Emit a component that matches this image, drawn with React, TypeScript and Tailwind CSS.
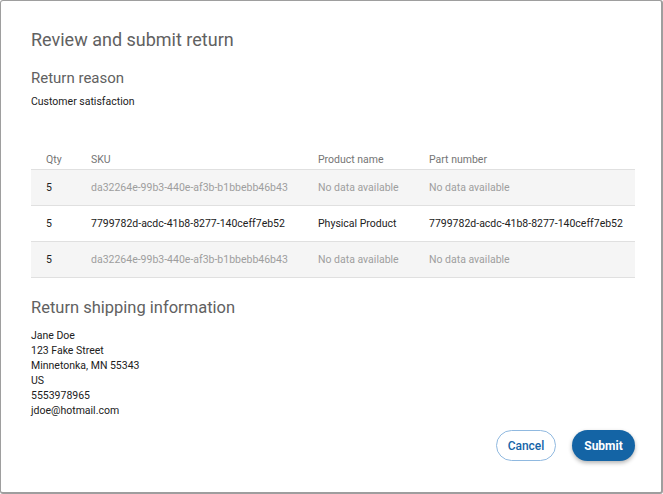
const rows = [
  { qty: "5", sku: "da32264e-99b3-440e-af3b-b1bbebb46b43", name: "No data available", part: "No data available", empty: true },
  { qty: "5", sku: "7799782d-acdc-41b8-8277-140ceff7eb52", name: "Physical Product", part: "7799782d-acdc-41b8-8277-140ceff7eb52", empty: false },
  { qty: "5", sku: "da32264e-99b3-440e-af3b-b1bbebb46b43", name: "No data available", part: "No data available", empty: true },
];

const address = ["Jane Doe", "123 Fake Street", "Minnetonka, MN 55343", "US", "5553978965", "jdoe@hotmail.com"];

function App() {
  return (
    <div
      className="w-[663px] h-[494px] box-border bg-white border-t border-l border-r-2 border-b-2 border-[#9e9e9e] rounded-[3px] pl-[30px] pr-[26px] pt-[28px] flex flex-col"
      style={{ fontFamily: "Roboto, 'Liberation Sans', sans-serif" }}
    >
      <h1 className="text-[18px] leading-[22px] text-[#616161]">Review and submit return</h1>

      <h2 className="mt-[18px] text-[15px] leading-[19px] text-[#616161]">Return reason</h2>
      <div className="mt-[6px] text-[10.5px] leading-[15px] text-[#212121]">Customer satisfaction</div>

      <div className="mt-[39px] text-[10.5px] leading-[15px]">
        <div className="grid grid-cols-[45px_227px_111px_1fr] pt-[4px] pb-[2px] border-b border-[#e0e0e0] text-[#757575]">
          <div className="pl-[15px]">Qty</div>
          <div className="pl-[15px]">SKU</div>
          <div className="pl-[15px]">Product name</div>
          <div className="pl-[15px]">Part number</div>
        </div>
        {rows.map((r, i) => (
          <div
            key={i}
            className={
              "grid grid-cols-[45px_227px_111px_1fr] h-[36px] items-center border-b border-[#e0e0e0] " +
              (i % 2 === 0 ? "bg-[#f5f5f5]" : "bg-white")
            }
          >
            <div className="pl-[15px] text-[#212121]">{r.qty}</div>
            <div className={"pl-[15px] " + (r.empty ? "text-[#9e9e9e]" : "text-[#212121]")}>{r.sku}</div>
            <div className={"pl-[15px] " + (r.empty ? "text-[#9e9e9e]" : "text-[#212121]")}>{r.name}</div>
            <div className={"pl-[15px] whitespace-nowrap " + (r.empty ? "text-[#9e9e9e]" : "text-[#212121]")}>{r.part}</div>
          </div>
        ))}
      </div>

      <h2 className="mt-[20px] text-[16.5px] leading-[20px] text-[#616161]">Return shipping information</h2>
      <div className="mt-[10px] text-[10.5px] leading-[15px] text-[#212121]">
        {address.map((line) => (
          <div key={line}>{line}</div>
        ))}
      </div>

      <div className="mt-[12px] flex justify-end gap-[16px]">
        <button className="h-[31px] w-[60px] rounded-full border border-[#90b9e0] bg-white text-[12px] font-medium text-[#1565a8]">
          Cancel
        </button>
        <button className="h-[31px] w-[63px] rounded-full bg-[#1464a5] text-[12px] font-bold text-white shadow-[0_2px_4px_rgba(0,0,0,0.3)]">
          Submit
        </button>
      </div>
    </div>
  );
}

export default App;
